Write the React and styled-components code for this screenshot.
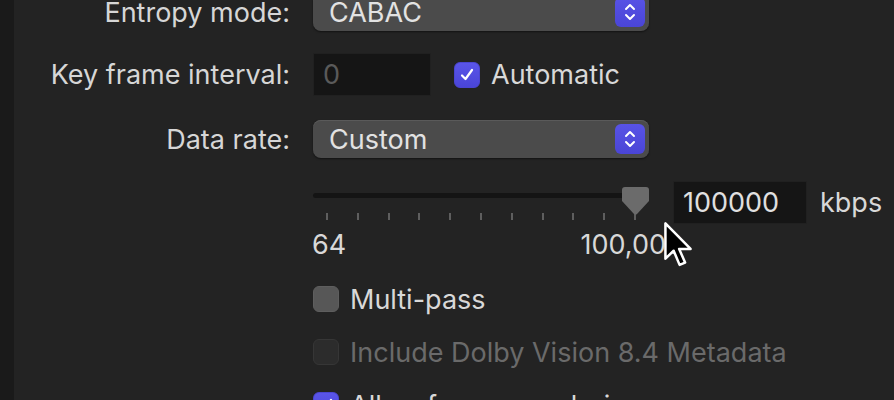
import React from 'react'
import styled, { createGlobalStyle } from 'styled-components'

const Global = createGlobalStyle`
  html, body { margin: 0; padding: 0; background: #232323; }
  body { font-family: "Inter", "Liberation Sans", sans-serif; overflow: hidden; }
`

const Screen = styled.div`
  display: flex;
  width: 894px;
  height: 400px;
  background: #232323;
  position: relative;
  overflow: hidden;
`

const Sidebar = styled.div`
  width: 14px;
  flex: none;
  background: #1a1a1a;
`

const Form = styled.div`
  display: flex;
  flex-direction: column;
  margin-top: -7px;
`

const Row = styled.div`
  display: flex;
  align-items: ${(p) => p.$align || 'center'};
  gap: 23px;
  margin-top: ${(p) => p.$top || 0}px;
`

const Label = styled.div`
  width: 276px;
  flex: none;
  text-align: right;
  color: #d6d6d6;
  font-size: 27px;
`

const Popup = styled.div`
  width: 336px;
  height: 38px;
  box-sizing: border-box;
  border-radius: 8px;
  background: #4b4b4b;
  box-shadow: inset 0 1px 0 #5a5a5a, 0 1px 2px rgba(0,0,0,0.5);
  display: flex;
  align-items: center;
  justify-content: space-between;
  padding: 0 4px 0 16px;
  color: #e2e2e2;
  font-size: 27px;
`

const Stepper = styled.div`
  width: 30px;
  height: 30px;
  border-radius: 6px;
  background: linear-gradient(#5853e6, #4a45d6);
  display: flex;
  align-items: center;
  justify-content: center;
`

const Field = styled.div`
  width: ${(p) => p.$w}px;
  height: 43px;
  box-sizing: border-box;
  background: #151515;
  border: 1px solid #202020;
  display: flex;
  align-items: center;
  padding-left: 9px;
  font-size: 27px;
  color: ${(p) => (p.$dim ? '#5a5a5a' : '#e0e0e0')};
`

const Check = styled.label`
  display: flex;
  align-items: center;
  gap: 11px;
  font-size: 27px;
  color: ${(p) => (p.$disabled ? '#6a6a6a' : '#d8d8d8')};
  height: 34px;
  white-space: nowrap;
`

const Box = styled.span`
  width: 26px;
  height: 26px;
  box-sizing: border-box;
  border-radius: 6px;
  flex: none;
  display: flex;
  align-items: center;
  justify-content: center;
  background: ${(p) =>
    p.$checked ? 'linear-gradient(#5a55e8, #4a45d8)' : p.$disabled ? '#2c2c2c' : '#575757'};
  border: 1px solid ${(p) => (p.$checked ? '#4a45d0' : p.$disabled ? '#363636' : '#5e5e5e')};
`

const SliderCol = styled.div`
  width: 337px;
  display: flex;
  flex-direction: column;
`

const Track = styled.div`
  position: relative;
  height: 29px;
  margin-top: 5px;
  &::before {
    content: '';
    position: absolute;
    left: 0;
    right: 6px;
    top: 7px;
    height: 5px;
    border-radius: 3px;
    background: #141414;
  }
`

const Thumb = styled.svg`
  position: absolute;
  right: 0;
  top: 0;
`

const Ticks = styled.div`
  display: flex;
  justify-content: space-between;
  padding: 0 14px 0 13px;
  margin-top: -2px;
`

const Tick = styled.span`
  width: 2px;
  height: 7px;
  background: #5e5e5e;
`

const Scale = styled.div`
  width: 371px;
  margin-left: -1px;
  margin-top: 8px;
  display: flex;
  justify-content: space-between;
  font-size: 27px;
  color: #d8d8d8;
`

const Unit = styled.span`
  font-size: 27px;
  color: #d8d8d8;
  margin-left: -10px;
`

const Cursor = styled.svg`
  position: absolute;
  left: 663px;
  top: 221px;
`

const Chevrons = () => (
  <svg width="14" height="22" viewBox="0 0 14 22">
    <path d="M3 8 L7 4 L11 8 M3 14 L7 18 L11 14" fill="none" stroke="#fff" strokeWidth="2" strokeLinecap="round" strokeLinejoin="round" />
  </svg>
)

const Tickmark = () => (
  <svg width="18" height="18" viewBox="0 0 18 18">
    <path d="M4 9.5 L7.5 13 L14 4" fill="none" stroke="#fff" strokeWidth="2.2" strokeLinecap="round" strokeLinejoin="round" />
  </svg>
)

const ticks = Array.from({ length: 11 })

export default function App() {
  return (
    <Screen>
      <Global />
      <Sidebar />
      <Form>
        <Row>
          <Label>Entropy mode:</Label>
          <Popup>
            CABAC
            <Stepper><Chevrons /></Stepper>
          </Popup>
        </Row>
        <Row $top={22}>
          <Label>Key frame interval:</Label>
          <Field $w={118} $dim>0</Field>
          <Check>
            <Box $checked><Tickmark /></Box>
            Automatic
          </Check>
        </Row>
        <Row $top={24}>
          <Label>Data rate:</Label>
          <Popup>
            Custom
            <Stepper><Chevrons /></Stepper>
          </Popup>
        </Row>
        <Row $top={23} $align="flex-start">
          <Label />
          <SliderCol>
            <Track>
              <Thumb width="29" height="30" viewBox="0 0 29 30">
                <path d="M4 1 H25 Q28 1 28 4 V15 L16 28 Q14.5 29.5 13 28 L1 15 V4 Q1 1 4 1 Z" fill="#6b6b6b" />
              </Thumb>
            </Track>
            <Ticks>
              {ticks.map((_, i) => <Tick key={i} />)}
            </Ticks>
            <Scale>
              <span>64</span>
              <span>100,000</span>
            </Scale>
          </SliderCol>
          <Row>
            <Field $w={134}>100000</Field>
            <Unit>kbps</Unit>
          </Row>
        </Row>
        <Row $top={21}>
          <Label />
          <Check>
            <Box />
            Multi-pass
          </Check>
        </Row>
        <Row $top={19}>
          <Label />
          <Check $disabled>
            <Box $disabled />
            Include Dolby Vision 8.4 Metadata
          </Check>
        </Row>
        <Row $top={19}>
          <Label />
          <Check>
            <Box $checked><Tickmark /></Box>
            Allow frame reordering
          </Check>
        </Row>
      </Form>
      <Cursor width="30" height="48" viewBox="0 0 13 21">
        <path d="M1 1 L1 16.5 L4.6 13 L7.2 19.2 L9.6 18.2 L7 12.2 L12 12.2 Z" fill="#000" stroke="#fff" strokeWidth="1.1" strokeLinejoin="round" />
      </Cursor>
    </Screen>
  )
}
